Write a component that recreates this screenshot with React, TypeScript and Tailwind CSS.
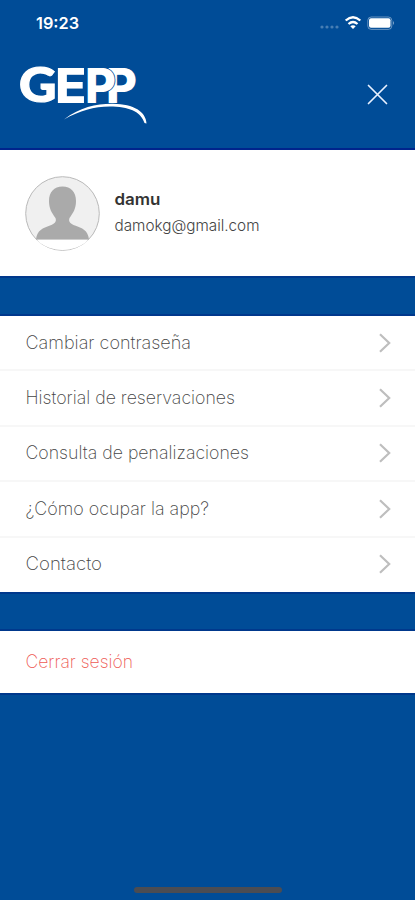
const items: { label: string; width: number }[] = [
  { label: 'Cambiar contraseña', width: 165 },
  { label: 'Historial de reservaciones', width: 209 },
  { label: 'Consulta de penalizaciones', width: 223 },
  { label: '¿Cómo ocupar la app?', width: 183 },
  { label: 'Contacto', width: 76 },
];

function Label({ text, width, className, size = 18.3, weight = 200 }: { text: string; width: number; className: string; size?: number; weight?: number }) {
  return (
    <svg width={width + 4} height="26" className={'block overflow-visible ' + className} fill="currentColor">
      <text x="-0.5" y="19" fontSize={size} fontWeight={weight} textLength={width} lengthAdjust="spacingAndGlyphs">{text}</text>
    </svg>
  );
}

function Logo() {
  return (
    <svg width="130" height="64" viewBox="20 62 130 64" className="block overflow-visible" fontWeight="800" fontSize="48" fill="white">
      <text x="19" y="102" fontWeight="900" textLength="37.5" lengthAdjust="spacingAndGlyphs" stroke="white" strokeWidth="1.2" className="font-['Lato',sans-serif]">G</text>
      <text x="55" y="102.5" textLength="31.5" lengthAdjust="spacingAndGlyphs">E</text>
      <text x="106" y="102.5" textLength="31" lengthAdjust="spacingAndGlyphs">P</text>
      <text x="85" y="102.5" textLength="31" lengthAdjust="spacingAndGlyphs" stroke="#004c97" strokeWidth="1.6" paintOrder="stroke">P</text>
      <path d="M64 119.5C80 107 97 103.6 113 103.8C134 104 146 112 146.5 123.5L144.5 123C141 113 132 107.5 113 106.6C96 106 81 110 64 119.5Z" />
    </svg>
  );
}

export default function App() {
  return (
    <div className="flex h-[900px] w-full flex-col overflow-hidden bg-[#004c97] font-['Inter',sans-serif]">
      <div className="flex h-[46px] shrink-0 items-center justify-between pl-9 pr-[20px]">
        <div className="text-[16.3px] font-semibold leading-none text-white">19:23</div>
        <svg width="76" height="20" viewBox="319 13 76 20" fill="white">
          <g opacity=".28">
            <circle cx="322" cy="27" r="1.6" /><circle cx="327" cy="27" r="1.6" /><circle cx="332" cy="27" r="1.6" /><circle cx="337" cy="27" r="1.6" />
          </g>
          <g fill="none" stroke="white" strokeWidth="2.3">
            <path d="M345.7 20.5Q353 14 360.3 20.5M348.5 24Q353 20 357.5 24" />
          </g>
          <path d="M350.3 26.2Q353 24.2 355.7 26.2L353 29Z" />
          <rect x="367.8" y="17" width="24" height="12.4" rx="3.4" fill="none" stroke="white" opacity=".4" />
          <rect x="369" y="18.2" width="21.5" height="9.6" rx="2" />
          <path d="M393 21Q395 23 393 25Z" opacity=".5" />
        </svg>
      </div>
      <div className="flex h-[104px] shrink-0 justify-between border-b-2 border-[#00248c] pl-5 pr-[27px] pt-4">
        <Logo />
        <svg width="21" height="21" className="mt-[22px]" stroke="#e8f1ff" strokeWidth="1.7" strokeLinecap="round"><path d="M1.5 1.5L19.5 19.5M19.5 1.5L1.5 19.5" /></svg>
      </div>
      <div className="flex h-[126px] shrink-0 items-center gap-[15px] bg-white pl-[25px]">
        <svg width="75" height="75" viewBox="0 0 75 75">
          <circle cx="37.5" cy="37.5" r="36.8" fill="#f0f0f0" stroke="#b9b9b9" />
          <path d="M12 64H63L60 67Q50 74 37.5 74T15 67Z" fill="white" />
          <path d="M37.5 10.5C46 10.5 51 16 51 25C51 33 48 37 44.5 42C43 46 46 48 50 49.5C57 52 63 54 64 63.5H11C12 54 18 52 25 49.5C29 48 32 46 30.5 42C27 37 24 33 24 25C24 16 29 10.5 37.5 10.5Z" fill="#aaa" />
        </svg>
        <div className="flex flex-col pb-[2px]">
          <Label text="damu" width={46} weight={600} size={16.5} className="text-[#333]" />
          <Label text="damokg@gmail.com" width={145} weight={300} size={15.5} className="text-[#444]" />
        </div>
      </div>
      <div className="h-[40px] shrink-0 border-b-2 border-t-2 border-[#00388c]" />
      <div className="flex h-[276px] shrink-0 flex-col bg-white">
        {items.map((item) => (
          <div key={item.label} className="flex h-[55.4px] shrink-0 items-center justify-between border-b-2 border-[#f7f7f7] pl-[26px] pr-6 last:h-[54.4px] last:border-white">
            <Label text={item.label} width={item.width + 0.5} className="text-[#444]" />
            <svg width="12" height="20" fill="none" stroke="#bebebe" strokeWidth="2.2"><path d="M1 1.2L10.2 10L1 18.8" /></svg>
          </div>
        ))}
      </div>
      <div className="h-[39px] shrink-0 border-b-2 border-t-2 border-[#00388c]" />
      <div className="flex h-[62px] shrink-0 items-center bg-white pl-[26px]">
        <Label text="Cerrar sesión" width={107.5} className="text-[#ee5a55]" />
      </div>
      <div className="flex flex-1 items-end justify-center border-t-2 border-[#00388c] pb-[7px]">
        <div className="h-[6px] w-[148px] rounded-full bg-[#4b4c52]" />
      </div>
    </div>
  );
}
